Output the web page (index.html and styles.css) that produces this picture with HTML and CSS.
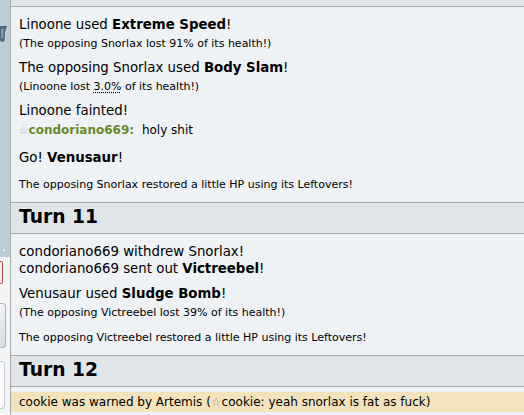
FILE: index.html
```html
<!DOCTYPE html>
<html>
<head>
<meta charset="utf-8">
<link rel="stylesheet" href="styles.css">
</head>
<body>
<div class="side">
  <div class="side-top">
    <svg class="sprite" width="8" height="17" viewBox="0 0 8 17">
      <path d="M0 0 H7 L6 3 L5 6 L4.5 15 L1.5 16 L0 14 Z" fill="#4e6779"/>
      <path d="M1 3 L4 2.5 L3.2 12 L1 12.5 Z" fill="#7f98a8"/>
    </svg>
    <span class="dot"></span>
  </div>
  <div class="red-box"></div>
  <div class="btn-grey"></div>
  <div class="btn-white"></div>
</div>
<div class="log">
  <div class="band-top"></div>
  <div class="m l1">Linoone used <b>Extreme Speed</b>!</div>
  <div class="s g4">(The opposing Snorlax lost 91% of its health!)</div>
  <div class="m g10">The opposing Snorlax used <b>Body Slam</b>!</div>
  <div class="s g4">(Linoone lost <abbr class="pct">3.0%</abbr> of its health!)</div>
  <div class="m g10">Linoone fainted!</div>
  <div class="c g4"><span class="star">☆</span><b class="name">condoriano669:</b> <span class="msg">holy shit</span></div>
  <div class="m g12">Go! <b>Venusaur</b>!</div>
  <div class="s g12">The opposing Snorlax restored a little HP using its Leftovers!</div>
  <h2 class="turn">Turn 11</h2>
  <div class="m g10">condoriano669 withdrew Snorlax!</div>
  <div class="m g1">condoriano669 sent out <b>Victreebel</b>!</div>
  <div class="m g9">Venusaur used <b>Sludge Bomb</b>!</div>
  <div class="s g4">(The opposing Victreebel lost 39% of its health!)</div>
  <div class="s g12">The opposing Victreebel restored a little HP using its Leftovers!</div>
  <h2 class="turn">Turn 12</h2>
  <div class="warn">cookie was warned by Artemis (<span class="star2">☆</span>cookie: yeah snorlax is fat as fuck)</div>
</div>
</body>
</html>
```
FILE: styles.css
```css
* { box-sizing: border-box; }
html, body { margin: 0; padding: 0; }
body {
  width: 524px;
  height: 415px;
  overflow: hidden;
  display: flex;
  font-family: "DejaVu Sans", Verdana, sans-serif;
  color: #000;
  background: #eef2f5;
}
.side {
  width: 10px;
  flex: none;
  display: flex;
  flex-direction: column;
  background: #f2f4f6;
}
.side-top {
  height: 257px;
  flex: none;
  background: #b9ccd8;
  position: relative;
}
.sprite { position: absolute; left: 0; top: 26px; }
.dot {
  position: absolute;
  left: 3px;
  top: 249px;
  width: 2px;
  height: 2px;
  background: #e6edf2;
}
.red-box {
  margin-top: 4px;
  width: 3px;
  height: 23px;
  border: 1px solid #b64a4a;
  border-left: none;
  border-radius: 0 2px 2px 0;
  background: #f7eeee;
}
.btn-grey {
  margin-top: 19px;
  width: 6px;
  height: 45px;
  border: 1px solid #a9b1b7;
  border-left: none;
  border-radius: 0 4px 4px 0;
  background: linear-gradient(#f2f4f6, #d9dee2);
}
.btn-white {
  margin-top: 13px;
  width: 5px;
  height: 48px;
  border: 1px solid #c5c9cd;
  border-left: none;
  border-radius: 0 4px 4px 0;
  background: #fbfbfb;
}
.log {
  flex: 1;
  border-left: 1px solid #aaaaaa;
  background: #eef2f5;
  padding: 0 8px;
  overflow: hidden;
}
.band-top {
  margin: 0 -8px;
  height: 7px;
  background: #dfe5e9;
  border-bottom: 1px solid #aaaaaa;
}
.m { font-size: 10pt; line-height: 16px; }
.s { font-size: 11px; line-height: 13px; }
.c { font-size: 9pt; line-height: 15px; }
.l1 { margin-top: 10px; }
.g1 { margin-top: 1px; }
.g4 { margin-top: 4px; }
.g9 { margin-top: 9px; }
.g10 { margin-top: 10px; }
.g12 { margin-top: 12px; }
.pct { text-decoration: underline dotted; text-underline-offset: 2px; }
.star { font-size: 8pt; color: #a8a8a8; }
.name { color: #688a2c; }
.msg { padding-left: 4px; }
.turn {
  margin: 11px -8px 0;
  padding: 3px 8px 5px;
  font-size: 14pt;
  line-height: 22px;
  font-weight: bold;
  background: #dfe5e9;
  border-top: 1px solid #aaaaaa;
  border-bottom: 1px solid #aaaaaa;
}
.warn {
  margin: 5px -8px 0;
  padding: 3px 8px 2px;
  font-size: 9pt;
  line-height: 15px;
  background: #f3e3bd;
}
.star2 { color: #a8a8a8; }
```
